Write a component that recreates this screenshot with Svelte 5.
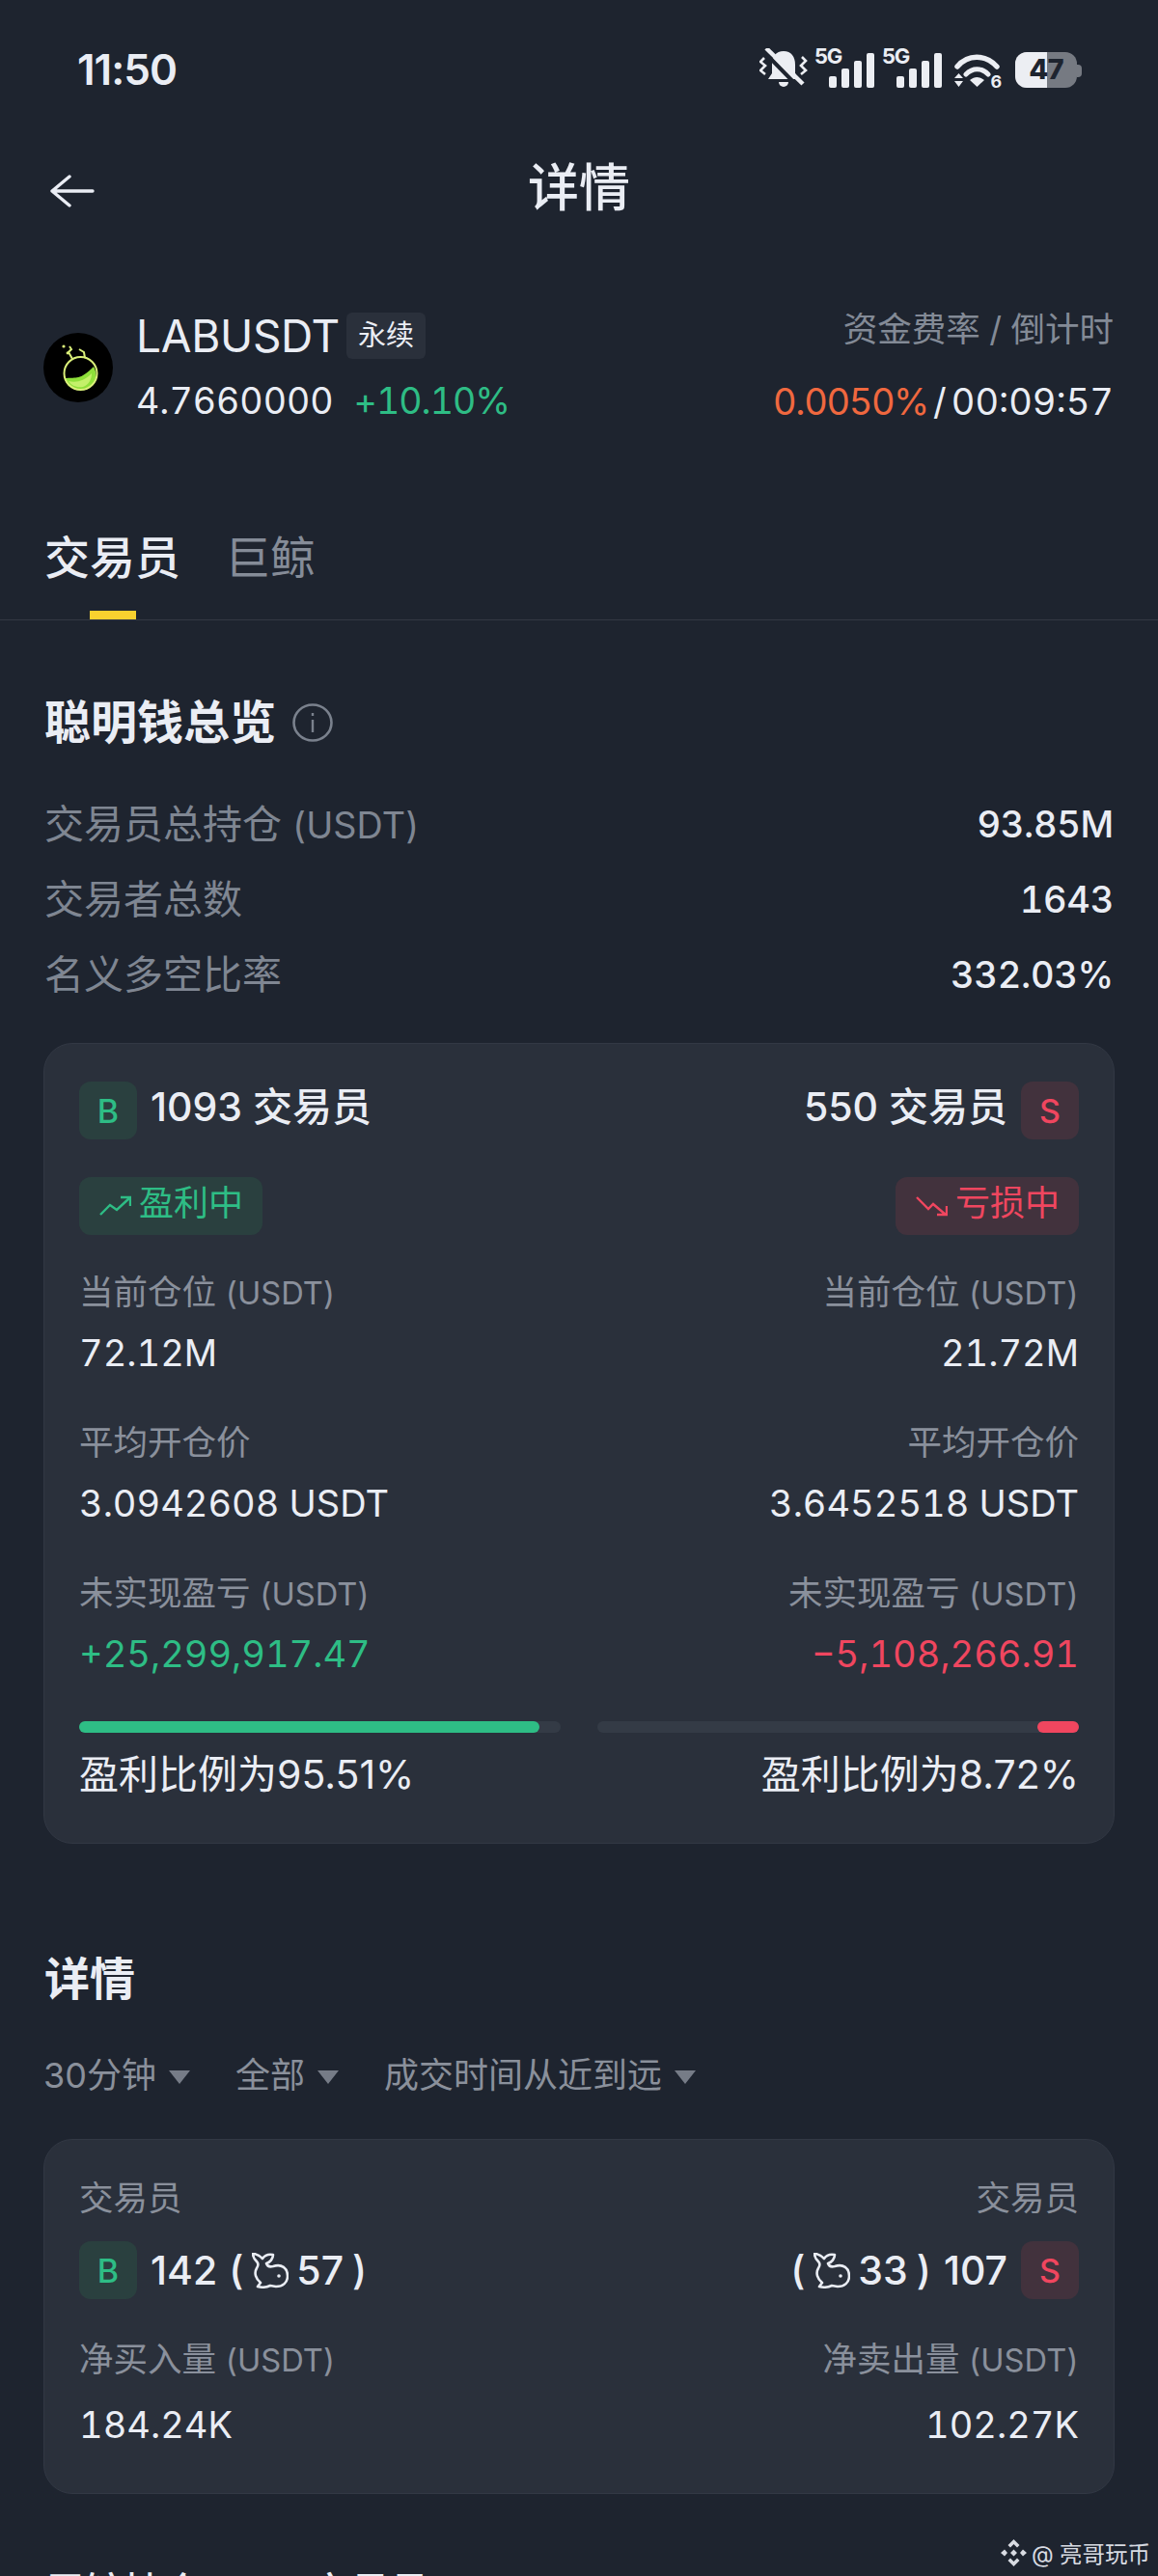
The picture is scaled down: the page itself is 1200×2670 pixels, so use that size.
<script lang="ts">
  const overview = [
    { label: "交易员总持仓", unit: "(USDT)", value: "93.85M" },
    { label: "交易者总数", unit: "", value: "1643" },
    { label: "名义多空比率", unit: "", value: "332.03%" },
  ];
  const stats = [
    { label: "当前仓位", unit: "(USDT)", long: "72.12M", short: "21.72M" },
    { label: "平均开仓价", unit: "", long: "3.0942608 USDT", short: "3.6452518 USDT" },
    { label: "未实现盈亏", unit: "(USDT)", long: "+25,299,917.47", short: "−5,108,266.91", colored: true },
  ];
  const bars = [12, 20, 28, 36];
  const whale =
    "M1 1C5 1 8 3 11 6C13 3 17 1 22 2C22 6 19 10 15 11C16 14 18 15 22 14C31 11 37 16 37 24C37 31 32 35 25 35L19 34C15 36 10 36 6 35L9 31C4 27 2 21 5 16C7 13 7 11 5 9C3 7 1 4 1 1Z";
</script>

<div class="page">
  <div class="status">
    <span class="time">11:50</span>
    <div class="sys">
      <svg width="50" height="41" viewBox="0 0 50 41">
        <path d="M25 3c-8 0-12 6-12 14v9l-4 6h32l-4-6v-9c0-8-4-14-12-14z" fill="#eceef3" />
        <path d="M20 35h10a5 5 0 0 1-10 0z" fill="#eceef3" />
        <path d="M3 2l39 40" stroke="#1e242f" stroke-width="4" />
        <path d="M7 0l38 37" stroke="#eceef3" stroke-width="4.500" />
        <path d="M5 10L1 14l5 4-5 5 5 4M44 9l4 4-5 5 5 5-5 4" stroke="#eceef3" stroke-width="2.600" fill="none" />
      </svg>
      <div class="sig">
        <span class="g5">5G</span>
        {#each bars as h}<i style="height:{h}px"></i>{/each}
      </div>
      <div class="sig second">
        <span class="g5">5G</span>
        {#each bars as h}<i style="height:{h}px"></i>{/each}
      </div>
      <svg class="wifi" width="51" height="36" viewBox="0 0 51 36">
        <path d="M4 14C15 1 33 1 45 14" stroke="#eceef3" stroke-width="5.500" stroke-linecap="round" fill="none" />
        <path d="M13 22c7-7 16-7 23 0" stroke="#eceef3" stroke-width="5" stroke-linecap="round" fill="none" />
        <path d="M17 28c5-4 10-4 15 0l-7.500 7z" fill="#eceef3" />
        <path d="M1 26l4.500-5 4.500 5zM1 29l4.500 6 4.500-6z" fill="#eceef3" />
        <text x="38.500" y="35.500" font-size="18" font-weight="700" fill="#eceef3">6</text>
      </svg>
      <div class="batt"><div class="level"></div><span>47</span></div>
    </div>
  </div>

  <header class="nav">
    <svg class="back" width="46" height="34" viewBox="0 0 46 34" fill="none">
      <path d="M2 17h42M20 2L2 17l18 15" stroke="#eaedf4" stroke-width="3.400" stroke-linecap="round" stroke-linejoin="round" />
    </svg>
    <h1>详情</h1>
  </header>

  <section class="ticker">
    <svg class="coin" width="72" height="72" viewBox="0 0 72 72">
      <circle cx="36" cy="36" r="36" fill="#000" />
      <path d="M22 47c8-1 12 1 19-3 5-3 8-6 11-9 4 7 3 15-2 19-6 6-18 6-24 1-2-2-3-5-4-8z" fill="#8fe03a" />
      <path d="M26 50c8 2 16 0 24-8 0 6-3 12-9 14-6 1-12-1-15-6z" fill="#c4f06a" />
      <circle cx="38.500" cy="42" r="17" fill="none" stroke="#dbf07a" stroke-width="2" />
      <path d="M30 27l-4-7 3-3-2-3M43 26l-1-6-5-3" fill="none" stroke="#dbf07a" stroke-width="2" />
      <circle cx="21" cy="14" r="1.600" fill="#dbf07a" />
      <circle cx="25" cy="21" r="1.400" fill="#dbf07a" />
    </svg>
    <div class="info">
      <div class="name"><span>LABUSDT</span><em>永续</em></div>
      <div class="price"><span>4.7660000</span><b>+10.10%</b></div>
    </div>
    <div class="funding">
      <div class="fund-label">资金费率 / 倒计时</div>
      <div class="fund-val"><span class="rate">0.0050%</span><span class="sl">/</span><span>00:09:57</span></div>
    </div>
  </section>

  <nav class="tabs">
    <div class="tab on">交易员</div>
    <div class="tab">巨鲸</div>
  </nav>

  <section class="overview">
    <h2>
      聪明钱总览
      <svg width="42" height="40" viewBox="0 0 42 40" fill="none">
        <ellipse cx="21" cy="20" rx="19.500" ry="18.500" stroke="#7a818d" stroke-width="2.600" />
        <path d="M21 17v13M21 10v3" stroke="#7a818d" stroke-width="2.400" />
      </svg>
    </h2>
    {#each overview as row}
      <div class="ov-row">
        <span class="ov-label">{row.label}{#if row.unit}<small>{row.unit}</small>{/if}</span>
        <b>{row.value}</b>
      </div>
    {/each}
  </section>

  <section class="card big">
    <div class="head">
      <div class="side"><span class="badge buy">B</span><span class="count">1093 交易员</span></div>
      <div class="side"><span class="count">550 交易员</span><span class="badge sell">S</span></div>
    </div>
    <div class="pills">
      <span class="pill up">
        <svg width="33" height="22" viewBox="0 0 33 22" fill="none"><path d="M1 20l10-10 7 5L31 3M22 2h10v9" stroke="#2ebd85" stroke-width="2.400" /></svg>
        <span class="pill-text">盈利中</span>
      </span>
      <span class="pill down">
        <svg width="33" height="22" viewBox="0 0 33 22" fill="none"><path d="M1 2l12 12 5-5 13 11M32 11v9H22" stroke="#f0465f" stroke-width="2.400" /></svg>
        <span class="pill-text">亏损中</span>
      </span>
    </div>
    {#each stats as s}
      <div class="stat">
        <div class="stat-labels">
          <span>{s.label}{#if s.unit}<small>{s.unit}</small>{/if}</span>
          <span>{s.label}{#if s.unit}<small>{s.unit}</small>{/if}</span>
        </div>
        <div class="stat-vals">
          <span class:gain={s.colored}>{s.long}</span>
          <span class:loss={s.colored}>{s.short}</span>
        </div>
      </div>
    {/each}
    <div class="bars">
      <div class="bar"><div class="fill g" style="width:95.51%"></div></div>
      <div class="bar right"><div class="fill r" style="width:8.72%"></div></div>
    </div>
    <div class="ratio"><span>盈利比例为95.51%</span><span>盈利比例为8.72%</span></div>
  </section>

  <h2 class="detail-title">详情</h2>
  <div class="filters">
    <span>30分钟<i></i></span>
    <span>全部<i></i></span>
    <span>成交时间从近到远<i></i></span>
  </div>

  <section class="card small">
    <div class="stat-labels"><span>交易员</span><span>交易员</span></div>
    <div class="head whales">
      <div class="side">
        <span class="badge buy">B</span>
        <span class="count">
          142
          <span class="paren gap-l">(</span>
          <svg width="38" height="37" viewBox="0 0 38 37" fill="none">
            <path d={whale} stroke="#eaedf4" stroke-width="2.600" stroke-linejoin="round" />
            <circle cx="28" cy="24" r="1.800" fill="#eaedf4" />
          </svg>
          57
          <span class="paren">)</span>
        </span>
      </div>
      <div class="side">
        <span class="count">
          <span class="paren">(</span>
          <svg width="38" height="37" viewBox="0 0 38 37" fill="none">
            <path d={whale} stroke="#eaedf4" stroke-width="2.600" stroke-linejoin="round" />
            <circle cx="28" cy="24" r="1.800" fill="#eaedf4" />
          </svg>
          33
          <span class="paren gap-r">)</span>
          107
        </span>
        <span class="badge sell">S</span>
      </div>
    </div>
    <div class="stat-labels net">
      <span>净买入量<small>(USDT)</small></span>
      <span>净卖出量<small>(USDT)</small></span>
    </div>
    <div class="stat-vals net-vals"><span>184.24K</span><span>102.27K</span></div>
  </section>

  <div class="mark">
    <svg width="27" height="28" viewBox="0 0 27 28" fill="#d8dbe2">
      <path d="M13.500 0l6 6-2.500 2.500-3.500-3.500L10 8.500 7.500 6zM4 10.500L7 14l-3 3.500L0 14zM23 10.500l4 3.500-4 3.500-3-3.500zM13.500 10.500L17 14l-3.500 3.500L10 14zM7.500 22l2.500-2.500 3.500 3.500 3.500-3.500 2.500 2.500-6 6z" />
    </svg>
    <span>@ 亮哥玩币</span>
  </div>

  <div class="cut"><span>巨鲸持仓</span><span>交易员</span></div>
</div>

<style>
  :global(body) {
    margin: 0;
    background: #1e242f;
  }

  .page {
    position: relative;
    width: 1200px;
    height: 2670px;
    overflow: hidden;
    background: #1e242f;
    color: #eaedf4;
    font-family: "Inter", "Noto Sans CJK SC", sans-serif;
    font-variant-numeric: tabular-nums;
  }

  .status {
    display: flex;
    justify-content: space-between;
    align-items: center;
    height: 144px;
    padding: 0 79px 0 80px;
  }

  .time {
    font-size: 44px;
    font-weight: 600;
    letter-spacing: -1px;
    font-variant-numeric: normal;
  }

  .sys {
    display: flex;
    align-items: flex-end;
    height: 41px;
    margin-top: -3px;
    gap: 7px;
  }

  .sig {
    position: relative;
    display: flex;
    align-items: flex-end;
    gap: 5px;
    width: 47px;
    height: 41px;
    padding-left: 15px;
  }

  .sig.second {
    margin-left: 1px;
  }

  .sig i {
    width: 8px;
    background: #eceef3;
    border-radius: 2px;
  }

  .g5 {
    position: absolute;
    left: 0;
    top: -5px;
    font-size: 22px;
    font-weight: 700;
    letter-spacing: -1.5px;
  }

  .wifi {
    margin-left: 5px;
    margin-right: 6px;
    overflow: visible;
  }

  .batt {
    position: relative;
    width: 64px;
    height: 37px;
    border-radius: 12px;
    background: #767a82;
    margin-right: 5px;
  }

  .batt::after {
    content: "";
    position: absolute;
    left: 64px;
    top: 13px;
    width: 5px;
    height: 13px;
    border-radius: 0 4px 4px 0;
    background: #767a82;
  }

  .level {
    width: 33px;
    height: 100%;
    background: #eceef3;
    border-radius: 12px 0 0 12px;
  }

  .batt span {
    position: absolute;
    left: 15px;
    top: 3px;
    font-size: 29px;
    line-height: 30px;
    font-weight: 800;
    color: #1e242f;
    letter-spacing: -1px;
  }

  .nav {
    position: relative;
    display: flex;
    justify-content: center;
    align-items: center;
    margin-top: 21px;
    height: 60px;
  }

  .back {
    position: absolute;
    left: 52px;
    top: 16px;
  }

  h1 {
    margin: 0;
    font-size: 53px;
    font-weight: 500;
    line-height: 60px;
  }

  .ticker {
    display: flex;
    align-items: flex-start;
    margin-top: 99px;
    padding: 0 46px 0 45px;
    height: 112px;
  }

  .coin {
    margin: 21px 24px 0 0;
  }

  .info {
    flex: 1;
  }

  .name {
    display: flex;
    align-items: center;
    gap: 7px;
    font-size: 46px;
    line-height: 48px;
    letter-spacing: -0.3px;
  }

  .name em {
    font-style: normal;
    font-size: 29px;
    line-height: 48px;
    padding: 0 12px;
    background: #2a303b;
    border-radius: 6px;
    letter-spacing: 0;
  }

  .price {
    display: flex;
    gap: 21px;
    margin-top: 24px;
    font-size: 37.500px;
    line-height: 40px;
  }

  .price b {
    font-weight: 400;
    color: #2ebd85;
    letter-spacing: -1px;
  }

  .funding {
    text-align: right;
  }

  .fund-label {
    color: #838a96;
    font-size: 35.500px;
    line-height: 36px;
  }

  .fund-val {
    margin-top: 36px;
    font-size: 38px;
    line-height: 40px;
  }

  .rate {
    color: #f0683f;
    letter-spacing: -1.400px;
  }

  .sl {
    margin: 0 5px;
  }

  .tabs {
    display: flex;
    gap: 46px;
    margin-top: 109px;
    padding: 0 46px;
    height: 97px;
    border-bottom: 1px solid #333843;
  }

  .tab {
    position: relative;
    font-size: 47px;
    line-height: 66px;
    color: #858c98;
  }

  .tab.on {
    color: #eaedf4;
    font-weight: 500;
  }

  .tab.on::after {
    content: "";
    position: absolute;
    left: 47px;
    bottom: 0;
    width: 48px;
    height: 9px;
    background: #f8d12f;
  }

  .overview {
    padding: 0 46px;
    margin-top: 76px;
  }

  h2 {
    display: flex;
    align-items: center;
    gap: 17px;
    margin: 0 0 36px;
    font-size: 48px;
    font-weight: 700;
    line-height: 60px;
  }

  .ov-row {
    display: flex;
    justify-content: space-between;
    align-items: center;
    height: 78px;
    font-size: 41px;
    color: #7f8692;
  }

  .ov-label {
    padding-bottom: 6px;
  }

  small {
    margin-left: 0.28em;
    font-size: 0.92em;
  }

  .ov-row b {
    color: #eaedf4;
    font-size: 38px;
    font-weight: 500;
    letter-spacing: -0.300px;
  }

  .card {
    margin: 0 45px;
    padding: 39px 36px;
    background: #2a303b;
    border: 1px solid #323844;
    border-radius: 30px;
    box-sizing: border-box;
  }

  .big {
    margin-top: 32px;
    height: 830px;
  }

  .big .count {
    padding-bottom: 8px;
  }

  .head {
    display: flex;
    justify-content: space-between;
  }

  .side {
    display: flex;
    align-items: center;
    gap: 14px;
  }

  .badge {
    display: flex;
    align-items: center;
    justify-content: center;
    width: 60px;
    height: 60px;
    border-radius: 12px;
    font-size: 34px;
    font-weight: 500;
  }

  .buy {
    color: #2ebd85;
    background: #2a403f;
  }

  .sell {
    color: #f0465f;
    background: #42323d;
  }

  .count {
    display: flex;
    align-items: center;
    gap: 8px;
    font-size: 41px;
    line-height: 50px;
    font-weight: 500;
    font-variant-numeric: normal;
  }

  .paren {
    margin: 0 1px;
  }

  .paren.gap-l {
    margin-left: 4px;
  }

  .paren.gap-r {
    margin-right: 5px;
  }

  .pills {
    display: flex;
    justify-content: space-between;
    margin-top: 39px;
  }

  .pill {
    display: flex;
    align-items: center;
    gap: 8px;
    height: 60px;
    padding: 0 20px 0 21px;
    border-radius: 12px;
    font-size: 36px;
    line-height: 50px;
  }

  .pill-text {
    padding-bottom: 6px;
  }

  .up {
    color: #2ebd85;
    background: #2a403f;
  }

  .down {
    color: #f0465f;
    background: #42323d;
  }

  .stat {
    margin-top: 35px;
    height: 121px;
  }

  .stat-labels,
  .stat-vals {
    display: flex;
    justify-content: space-between;
  }

  .stat-labels {
    color: #8a909c;
    font-size: 35.500px;
    line-height: 50px;
  }

  .stat-vals {
    margin-top: 12px;
    font-size: 38px;
    line-height: 50px;
  }

  .gain {
    color: #2ebd85;
  }

  .loss {
    color: #f0465f;
  }

  .bars {
    display: flex;
    gap: 38px;
    margin-top: 36px;
  }

  .bar {
    display: flex;
    flex: 1;
    height: 12px;
    border-radius: 6px;
    background: #343b46;
  }

  .bar.right {
    justify-content: flex-end;
  }

  .fill {
    height: 100%;
    border-radius: 6px;
  }

  .g {
    background: #2ebd85;
  }

  .r {
    background: #f0465f;
  }

  .ratio {
    display: flex;
    justify-content: space-between;
    margin-top: 18px;
    font-size: 41px;
    line-height: 50px;
    font-variant-numeric: normal;
  }

  .detail-title {
    margin: 110px 46px 0;
    font-weight: 600;
    font-size: 47px;
  }

  .filters {
    display: flex;
    gap: 47px;
    margin: 45px 46px 0 45px;
    color: #8a909b;
    font-size: 36px;
    line-height: 50px;
    font-variant-numeric: normal;
  }

  .filters span {
    display: flex;
    align-items: center;
    gap: 13px;
  }

  .filters i {
    width: 0;
    height: 0;
    margin-top: 4px;
    border: 11.500px solid transparent;
    border-top: 14px solid #767c87;
    border-bottom: 0;
  }

  .small {
    margin-top: 41px;
    height: 368px;
    padding-top: 36px;
  }

  .whales {
    margin-top: 19px;
  }

  .net {
    margin-top: 38px;
  }

  .net-vals {
    margin-top: 17px;
  }

  .mark {
    position: absolute;
    right: 8px;
    top: 2629px;
    display: flex;
    align-items: center;
    gap: 5px;
    font-size: 23.500px;
    color: #d8dbe2;
  }

  .cut {
    display: flex;
    gap: 112px;
    margin: 76px 46px 0;
    font-size: 41px;
    line-height: 50px;
    font-weight: 500;
  }
</style>
